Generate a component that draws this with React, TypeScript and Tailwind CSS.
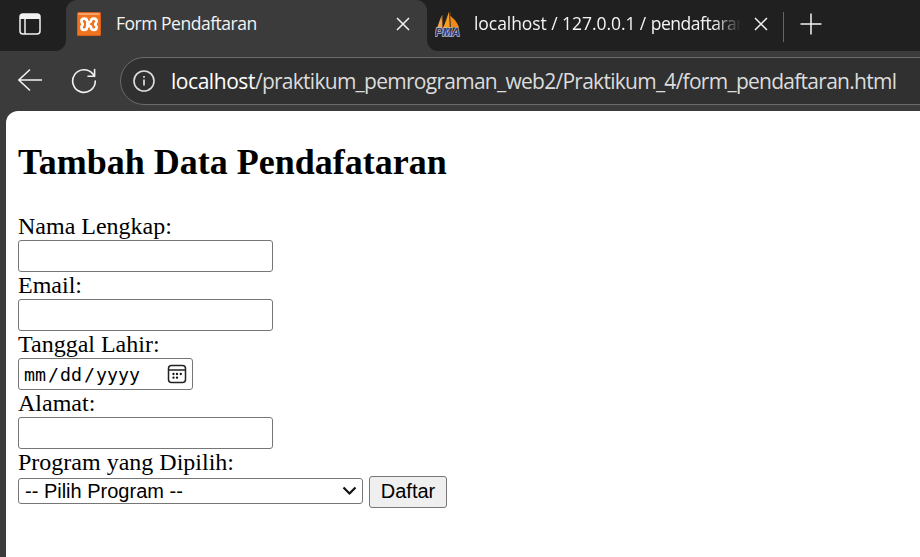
import React from "react";

const UI = "font-['Open_Sans','Noto_Sans',sans-serif]";

function XamppIcon() {
  return (
    <svg width="24" height="24" viewBox="0 0 24 24" fill="none" className="shrink-0">
      <rect width="24" height="24" rx="1.5" fill="#d9601a" />
      <rect x="1" y="1" width="22" height="22" rx="1" fill="#f0741f" />
      <rect x="1.5" y="1" width="21" height="2" fill="#f5a36a" />
      <path
        d="M10 8.800C9.600 5.600 4.400 6 4.400 9.200 4.400 10.600 5.700 11.200 5.700 12.200S4.400 13.800 4.400 15.200C4.400 18.600 9.800 18.800 10 15.400 10.200 13.800 13.800 13.800 14 15.400 14.200 18.800 19.600 18.600 19.600 15.200 19.600 13.800 18.300 13.200 18.300 12.200S19.600 10.600 19.600 9.200C19.600 6 14.400 5.600 14 8.800 13.800 10.400 10.200 10.400 10 8.800ZM9 12.200h4"
        stroke="#fff"
        strokeWidth="2.700"
        strokeLinejoin="round"
      />
    </svg>
  );
}

function PmaIcon() {
  return (
    <svg width="26" height="26" viewBox="0 0 26 26" className="shrink-0">
      <path d="M2 17 6.500 4.500 7.500 17Z" fill="#f0a050" />
      <path d="M8 17C10.500 12 12 6 14 .8L15 17Z" fill="#f89c22" />
      <path d="M15 4.500C19 8 21.500 10 24 16L16 17Z" fill="#ef8a18" />
      <path d="M7.500 4v13M15 1v16" stroke="#8b5a25" strokeWidth=".7" />
      <text
        x="0"
        y="24.500"
        fontFamily="Liberation Sans, sans-serif"
        fontSize="11"
        fontWeight="700"
        fontStyle="italic"
        fill="#34396f"
        stroke="#b9bbd0"
        strokeWidth="1.400"
        paintOrder="stroke"
        textLength="25"
        lengthAdjust="spacingAndGlyphs"
      >
        PMA
      </text>
    </svg>
  );
}

function CloseIcon() {
  return (
    <svg width="14" height="14" viewBox="0 0 14 14" className="shrink-0" stroke="#f2f2f2" strokeWidth="1.500">
      <path d="M1 1l12 12M13 1 1 13" />
    </svg>
  );
}

function TabStrip() {
  return (
    <div className="flex h-[51px] bg-[#3b3b3b]">
      <div className="flex h-full w-[66px] items-center rounded-br-[11px] bg-[#202020] pl-[19px]">
        <svg width="22" height="22" viewBox="0 0 22 22" fill="none" className="mt-[-3px]">
          <rect x="1" y="1" width="20" height="20" rx="3" stroke="#f2f2f2" strokeWidth="1.500" />
          <path d="M1 5V4a3 3 0 0 1 3-3h14a3 3 0 0 1 3 3v2H1Z" fill="#f2f2f2" />
          <path d="M6 6v15" stroke="#f2f2f2" strokeWidth="1.500" />
        </svg>
      </div>
      <div className="h-full w-[361px] bg-[#202020]">
        <div className="flex h-full items-center rounded-t-[11px] bg-[#3b3b3b] pb-[3px] pl-[11px] pr-[17px]">
          <XamppIcon />
          <span className="ml-[15px] mt-[-2px] flex-1 whitespace-nowrap text-[17.5px] tracking-[-0.48px] text-[#f4f4f4]">
            Form Pendaftaran
          </span>
          <CloseIcon />
        </div>
      </div>
      <div className="flex h-full flex-1 items-center rounded-bl-[11px] bg-[#202020] pb-[3px] pl-[8px]">
        <PmaIcon />
        <span className="ml-[13px] mt-[-2px] w-[267px] overflow-hidden whitespace-nowrap text-[17.5px] tracking-[-0.48px] text-[#f4f4f4] [mask-image:linear-gradient(to_right,black_90%,transparent_100%)]">
          <span className="tracking-[-0.060px]">localhost / 127.0.0.1 / </span>pendaftaran
        </span>
        <span className="ml-[13px]">
          <CloseIcon />
        </span>
        <div className="ml-[15px] mt-[6px] h-[30px] w-px bg-[#656565]" />
        <svg width="22" height="22" viewBox="0 0 22 22" className="ml-4" stroke="#f2f2f2" strokeWidth="1.500">
          <path d="M0.500 11h21M11 .5v21" />
        </svg>
      </div>
    </div>
  );
}

function Toolbar() {
  return (
    <div className="flex h-[60px] pl-[18px] pt-[6px]">
      <svg width="24" height="22" viewBox="0 0 24 22" fill="none" stroke="#f2f2f2" strokeWidth="1.600" className="mt-3 shrink-0" strokeLinecap="round" strokeLinejoin="round">
        <path d="M23.500 11H.8M11.500 1 .8 11l10.700 10" />
      </svg>
      <svg width="26" height="26" viewBox="0 0 26 26" fill="none" stroke="#f2f2f2" strokeWidth="1.600" className="ml-[29px] mt-[11px] shrink-0" strokeLinecap="round" strokeLinejoin="round">
        <path d="M24.300 13A11.300 11.300 0 1 1 21.900 6.100L23.600 8.300M23.600 1.500v6.800H17" />
      </svg>
      <div className="ml-[23px] h-12 flex-1 overflow-hidden">
        <div className="flex h-12 w-[830px] items-center rounded-full border-[1.500px] border-[#6a6a6a] bg-[#303030] pl-3">
          <svg width="22" height="22" viewBox="0 0 22 22" fill="none" className="shrink-0" stroke="#dedede">
            <circle cx="11" cy="11" r="10" strokeWidth="1.600" />
            <path d="M11 9.500v6M11 6v1.800" strokeWidth="1.700" />
          </svg>
          <span className="ml-4 mt-[2px] whitespace-nowrap text-[21px] tracking-[-0.73px] text-[#dcdcdc]">
            <span className="tracking-[-0.450px] text-white">localhost</span>/praktikum_pemrograman_web2/Praktikum_4/form_pendaftaran.html
          </span>
        </div>
      </div>
    </div>
  );
}

function Field({ label, children }: { label: string; children?: React.ReactNode }) {
  return (
    <div>
      <label className="block h-[27px] text-2xl leading-[27px]">{label}</label>
      {children ?? (
        <input className="block h-8 w-[255px] rounded-[3px] border border-[#767676] bg-white px-1 text-xl" />
      )}
    </div>
  );
}

function DateField() {
  return (
    <div className="flex h-8 w-[175px] items-center justify-between rounded-[3px] border border-[#767676] pl-[5px] pr-[5px]">
      <div className="mt-[2px] flex font-['DejaVu_Sans_Mono',monospace] text-[18.270px] leading-8">
        <span className="w-[23px]">mm</span>
        <span className="w-[13px] text-center">/</span>
        <span className="w-[23px]">dd</span>
        <span className="w-[13px] text-center">/</span>
        <span>yyyy</span>
      </div>
      <svg width="20" height="20" viewBox="0 0 20 20" fill="none" stroke="#222" strokeWidth="1.500">
        <rect x="1.500" y="1.500" width="17" height="17" rx="3" />
        <path d="M1.500 6h17" />
        <g fill="#111" stroke="none">
          <circle cx="6.500" cy="10" r="1.150" />
          <circle cx="10" cy="10" r="1.150" />
          <circle cx="13.800" cy="10" r="1.150" />
          <circle cx="6.500" cy="13.700" r="1.150" />
          <circle cx="10" cy="13.700" r="1.150" />
        </g>
      </svg>
    </div>
  );
}

export default function App() {
  return (
    <div className={`h-[557px] w-[920px] overflow-hidden bg-[#3b3b3b] ${UI}`}>
      <TabStrip />
      <Toolbar />
      <main className="ml-[6px] h-[446px] rounded-tl-[12px] bg-white pl-3 pt-[30px] font-['Liberation_Serif',serif] text-black">
        <h2 className="mb-[30px] h-[42px] text-[36px] font-bold leading-[42px]">Tambah Data Pendafataran</h2>
        <Field label="Nama Lengkap:" />
        <Field label="Email:" />
        <Field label="Tanggal Lahir:">
          <DateField />
        </Field>
        <Field label="Alamat:" />
        <Field label="Program yang Dipilih:">
          <div className="flex items-center gap-[6px] font-['Liberation_Sans',sans-serif] text-xl">
            <button className="mt-[-2px] flex h-[26px] w-[345px] items-center justify-between rounded-[3px] border border-[#767676] bg-white pl-[6px] pr-[5px] leading-6">
              <span>-- Pilih Program --</span>
              <svg width="15" height="10" viewBox="0 0 15 10" fill="none" stroke="#111" strokeWidth="2.200">
                <path d="M1.500 1.500 7.500 7.500l6-6" />
              </svg>
            </button>
            <button className="h-8 w-[78px] rounded-[3px] border border-[#767676] bg-[#efefef] pb-[2px] leading-[28px]">
              Daftar
            </button>
          </div>
        </Field>
      </main>
    </div>
  );
}
